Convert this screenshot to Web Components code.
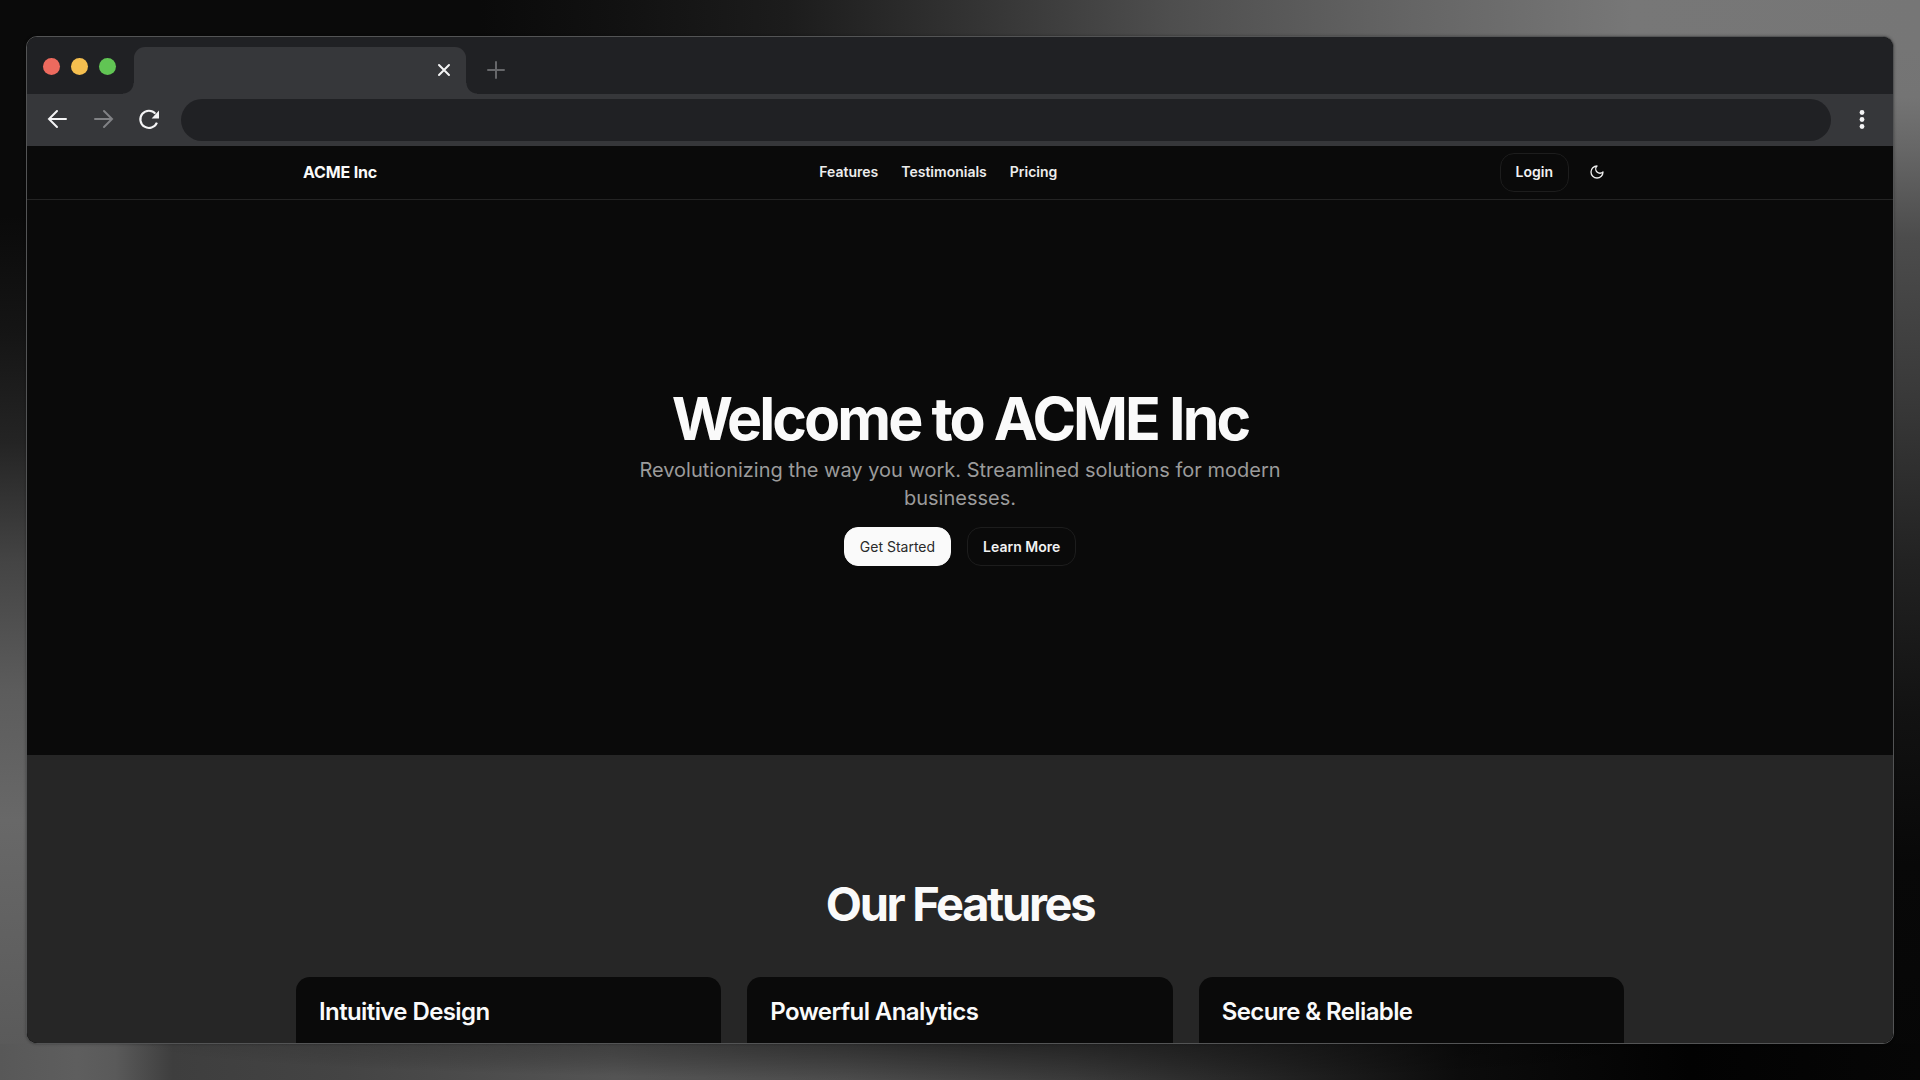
<!DOCTYPE html>
<html lang="en">
<head>
<meta charset="utf-8">
<title>ACME Inc</title>
<style>
  html, body { margin: 0; height: 100%; }
  body { font-family: Inter, "Liberation Sans", sans-serif; background: #0a0a0a; overflow: hidden; }
</style>
</head>
<body>
<desk-backdrop>
  <browser-window>
    <site-header slot="page"></site-header>
    <hero-section slot="page" heading="Welcome to ACME Inc">
      Revolutionizing the way you work. Streamlined solutions for modern businesses.
      <ui-button slot="actions" variant="primary">Get Started</ui-button>
      <ui-button slot="actions">Learn More</ui-button>
    </hero-section>
    <features-section slot="page" heading="Our Features">
      <feature-card>Intuitive Design</feature-card>
      <feature-card>Powerful Analytics</feature-card>
      <feature-card>Secure &amp; Reliable</feature-card>
    </features-section>
  </browser-window>
</desk-backdrop>

<script>
const define = (name, html) => customElements.define(name, class extends HTMLElement {
  constructor() {
    super();
    this.attachShadow({ mode: 'open' }).innerHTML = '<style>*{box-sizing:border-box}</style>' + html;
  }
  connectedCallback() {
    const h = this.shadowRoot.querySelector('[data-heading]');
    if (h) h.textContent = this.getAttribute('heading');
  }
});

define('ui-button', `
<style>
  :host { display: inline-flex; }
  button { font: 600 14px/20px Inter, "Liberation Sans", sans-serif; height: 39px; padding: 0 15px; border-radius: 14px;
    border: 1px solid #1d1d1d; background: #0a0a0a; color: #f2f2f2; cursor: pointer; white-space: nowrap; }
  :host([variant=primary]) button { background: #fafafa; border-color: #fafafa; color: #2a2a2a; font-weight: 400; }
</style>
<button type="button"><slot></slot></button>`);

/* Soft grey glow that runs round the window */
define('desk-backdrop', `
<style>
  :host { display: block; height: 100vh; box-sizing: border-box; padding: 36px 26px;
    background:
      linear-gradient(90deg, #0a0a0a 0, #0a0a0a 25%, #111 32%, #1c1c1c 41%, #343434 51%, #4e4e4e 61%, #646464 73%, #777 85%, #767676 100%) top / 100% 50px no-repeat,
      radial-gradient(ellipse 44% 100% at 51% 0, #0006, #0000) bottom / 100% 36px no-repeat,
      linear-gradient(90deg, #585858 0, #5e5e5e 4%, #5a5a5a 6%, #3e3e3e 9%, #444 18%, #545454 32%, #4c4c4c 44%, #3a3a3a 56%, #242424 66%, #0c0c0c 76%, #020202 88%, #060606 100%) bottom / 100% 36px no-repeat,
      linear-gradient(#0a0a0a 0, #0a0a0a 20%, #151515 31%, #242424 41%, #444 52%, #5c5c5c 64%, #686868 76%, #606060 88%, #585858 100%) left / 50% 100% no-repeat,
      linear-gradient(#767676 0, #747474 9%, #666 14%, #4c4c4c 22%, #3a3a3a 36%, #222 52%, #121212 66%, #080808 80%, #060606 100%) right / 50% 100% no-repeat; }
</style>
<slot></slot>`);

define('browser-window', `
<style>
  :host { display: flex; flex-direction: column; height: 100%; box-sizing: border-box; overflow: hidden;
    border: 1px solid #535455; border-radius: 11px; background: #0a0a0a; box-shadow: 0 0 3px #0005; }
  .tabs { display: flex; align-items: flex-end; flex: none; height: 57px; background: #202124; }
  .lights { display: flex; gap: 11px; padding: 0 0 19px 16px; width: 107px; }
  .lights i { width: 17px; height: 17px; border-radius: 50%; background: #ed6a5e; }
  .lights i:nth-child(2) { background: #f5bf4f; }
  .lights i:nth-child(3) { background: #61c554; }
  .tab { position: relative; display: flex; align-items: center; justify-content: flex-end; width: 332px; height: 47px; padding: 0 13px 1px 0;
    border-radius: 11px 11px 0 0; background: #36373a; }
  .tab::before, .tab::after { content: ""; position: absolute; bottom: 0; width: 11px; height: 11px; }
  .tab::before { right: 100%; background: radial-gradient(circle at 0 0, #0000 10px, #36373a 11px); }
  .tab::after { left: 100%; background: radial-gradient(circle at 100% 0, #0000 10px, #36373a 11px); }
  button { display: grid; place-items: center; padding: 0; border: 0; background: none; color: #f4f4f5; }
  svg { display: block; fill: none; stroke: currentColor; }
  .new { margin: 0 0 14px 20px; color: #66676a; }
  .bar { display: flex; align-items: center; flex: none; height: 52px; padding: 0 18px 0 17px; background: #36373a; }
  .nav { display: flex; gap: 20px; }
  .dim { color: #818285; }
  input { flex: 1; min-width: 0; height: 42px; margin: 0 18px 0 19px; padding: 0 20px; border: 0; border-radius: 21px; background: #202124; color: #eee; font: 16px Inter, sans-serif; outline: 0; }
  .page { flex: 1; min-height: 0; overflow: hidden; background: #0a0a0a; }
</style>
<div class="tabs">
  <div class="lights"><i></i><i></i><i></i></div>
  <div class="tab"><button aria-label="Close tab"><svg width="18" height="18" stroke-width="2" stroke-linecap="round"><path d="M4 4 14 14M14 4 4 14"/></svg></button></div>
  <button class="new" aria-label="New tab"><svg width="20" height="20" stroke-width="2" stroke-linecap="round"><path d="M10 2V18M2 10H18"/></svg></button>
</div>
<div class="bar">
  <div class="nav">
    <button aria-label="Back"><svg width="26" height="26" stroke-width="2" stroke-linecap="round"><path d="M22 12H5M13 4 5 12 13 20"/></svg></button>
    <button class="dim" aria-label="Forward"><svg width="26" height="26" stroke-width="2" stroke-linecap="round"><path d="M5 12H22M14 4 22 12 14 20"/></svg></button>
    <button aria-label="Reload"><svg width="26" height="26" stroke-width="2.1"><path d="M20.9 15.6A8.6 8.6 0 1 1 19.4 6.6"/><path d="M23 3.4V11.4H15.6Z" fill="currentColor" stroke="none"/></svg></button>
  </div>
  <input type="text" aria-label="Address">
  <button aria-label="Menu"><svg width="26" height="26"><g fill="currentColor" stroke="none"><circle cx="13" cy="5.5" r="2.4"/><circle cx="13" cy="12.5" r="2.4"/><circle cx="13" cy="19.5" r="2.4"/></g></svg></button>
</div>
<div class="page"><slot name="page"></slot></div>`);

define('site-header', `
<style>
  :host { display: block; border-bottom: 1px solid #242424; }
  header { display: flex; align-items: center; justify-content: space-between; max-width: 1314px; height: 53px; margin: 0 auto; padding-bottom: 1px; box-sizing: border-box; }
  a { color: #ededed; text-decoration: none; }
  .brand { font: 700 16px/24px Inter, "Liberation Sans", sans-serif; letter-spacing: -0.01em; color: #fafafa; }
  nav { display: flex; gap: 23px; font-size: 14px; line-height: 20px; font-weight: 600; }
  .side { display: flex; align-items: center; gap: 8px; }
  .theme { display: grid; place-items: center; width: 40px; height: 40px; padding: 0; border: 0; background: none; color: #ededed; }
</style>
<header>
  <a class="brand" href="#">ACME Inc</a>
  <nav><a href="#features">Features</a><a href="#testimonials">Testimonials</a><a href="#pricing">Pricing</a></nav>
  <div class="side">
    <ui-button>Login</ui-button>
    <button class="theme" aria-label="Toggle theme"><svg width="16" height="16" viewBox="0 0 24 24" fill="none" stroke="currentColor" stroke-width="2" stroke-linecap="round" stroke-linejoin="round"><path d="M12 3a6 6 0 0 0 9 9 9 9 0 1 1-9-9Z"/></svg></button>
  </div>
</header>`);

define('hero-section', `
<style>
  :host { display: flex; flex-direction: column; align-items: center; padding: 189px 24px; text-align: center; }
  h1 { margin: 0; font-size: 59px; line-height: 60px; font-weight: 700; letter-spacing: -0.05em; color: #fafafa; }
  p { max-width: 680px; margin: 7px 0 15px; font-size: 20px; line-height: 28px; color: #9b9b9b; }
  .actions { display: flex; gap: 16px; }
</style>
<h1 data-heading></h1>
<p><slot></slot></p>
<div class="actions"><slot name="actions"></slot></div>`);

define('features-section', `
<style>
  :host { display: block; padding: 125px 24px; background: #262626; }
  h2 { margin: 0 0 49px; text-align: center; font-size: 47px; line-height: 48px; font-weight: 700; letter-spacing: -0.05em; color: #fafafa; }
  .grid { display: grid; grid-template-columns: repeat(3, 1fr); gap: 26px; max-width: 1328px; margin: 0 auto; }
</style>
<h2 data-heading></h2>
<div class="grid"><slot></slot></div>`);

define('feature-card', `
<style>
  :host { display: block; min-height: 180px; box-sizing: border-box; padding: 23px; border-radius: 14px; background: #0a0a0a; }
  h3 { margin: 0; font-size: 24px; line-height: 24px; font-weight: 600; letter-spacing: -0.025em; color: #fafafa; }
</style>
<h3><slot></slot></h3>`);
</script>
</body>
</html>
